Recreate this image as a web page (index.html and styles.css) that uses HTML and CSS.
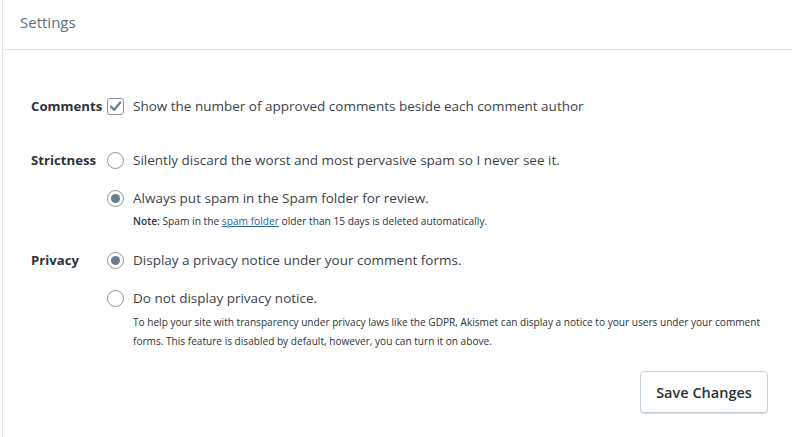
FILE: index.html
```html
<!DOCTYPE html>
<html>
<head>
<meta charset="utf-8">
<link rel="stylesheet" href="styles.css">
</head>
<body>
<div class="card">
  <div class="card-header">Settings</div>
  <div class="card-body">
    <div class="row row-comments">
      <div class="label">Comments</div>
      <div class="controls">
        <label class="option">
          <span class="checkbox"><svg viewBox="0 0 17 17" width="17" height="17"><path d="M4 8.6 L7.2 11.8 L13.2 4.6" fill="none" stroke="#6b8592" stroke-width="2.4" stroke-linecap="round" stroke-linejoin="round"/></svg></span>
          <span class="option-text">Show the number of approved comments beside each comment author</span>
        </label>
      </div>
    </div>
    <div class="row row-strictness">
      <div class="label">Strictness</div>
      <div class="controls">
        <label class="option">
          <span class="radio"></span>
          <span class="option-text">Silently discard the worst and most pervasive spam so I never see it.</span>
        </label>
        <label class="option option-next">
          <span class="radio checked"></span>
          <span class="option-text">Always put spam in the Spam folder for review.</span>
        </label>
        <p class="note"><strong>Note:</strong> Spam in the <a href="#">spam folder</a> older than 15 days is deleted automatically.</p>
      </div>
    </div>
    <div class="row row-privacy">
      <div class="label">Privacy</div>
      <div class="controls">
        <label class="option">
          <span class="radio checked"></span>
          <span class="option-text">Display a privacy notice under your comment forms.</span>
        </label>
        <label class="option option-next">
          <span class="radio"></span>
          <span class="option-text">Do not display privacy notice.</span>
        </label>
        <p class="help">To help your site with transparency under privacy laws like the GDPR, Akismet can display a notice to your users under your comment forms. This feature is disabled by default, however, you can turn it on above.</p>
      </div>
    </div>
    <div class="actions">
      <button class="save">Save Changes</button>
    </div>
  </div>
</div>
</body>
</html>
```
FILE: styles.css
```css
html, body {
  margin: 0;
  padding: 0;
  background: #ffffff;
}
body {
  font-family: "Open Sans", "Noto Sans", sans-serif;
  color: #3c434a;
}
.card {
  margin-left: 2px;
  border-left: 1px solid #dfe7ec;
  min-height: 437px;
}
.card-header {
  height: 50px;
  box-sizing: border-box;
  border-bottom: 1px solid #dce6ee;
  padding: 12px 0 0 17px;
  font-size: 15px;
  color: #5c6f80;
}
.card-body {
  padding: 44px 24px 0 28px;
}
.row {
  display: flex;
}
.label {
  width: 76px;
  flex: none;
  font-weight: 700;
  font-size: 13.2px;
  line-height: 24px;
  color: #2c3338;
}
.controls {
  flex: 1;
  min-width: 0;
}
.row-strictness {
  margin-top: 30px;
}
.row-privacy {
  margin-top: 19px;
}
.option {
  display: flex;
  align-items: center;
  height: 24px;
}
.option-next {
  margin-top: 14px;
}
.option-text {
  margin-left: 9px;
  font-size: 13.5px;
  color: #3c434a;
}
.checkbox {
  width: 15px;
  height: 15px;
  border: 1px solid #8c9196;
  border-radius: 3px;
  position: relative;
  flex: none;
}
.checkbox svg {
  position: absolute;
  left: -1px;
  top: -1px;
}
.radio {
  width: 15px;
  height: 15px;
  border: 1px solid #8f9398;
  border-radius: 50%;
  flex: none;
  display: flex;
  align-items: center;
  justify-content: center;
}
.radio.checked::after {
  content: "";
  width: 9px;
  height: 9px;
  border-radius: 50%;
  background: #6a7f8d;
}
.note {
  margin: 3px 0 0 26px;
  font-size: 10.2px;
  line-height: 16px;
  color: #2c3338;
}
.note strong {
  font-weight: 600;
}
.note a {
  color: #2a6496;
  text-decoration: underline;
}
.help {
  margin: 3px 0 0 26px;
  font-size: 10.1px;
  line-height: 19px;
  color: #2c3338;
}
.actions {
  display: flex;
  justify-content: flex-end;
  margin-top: 20px;
}
.save {
  width: 128px;
  height: 42px;
  background: #ffffff;
  border: 1px solid #c8d4dd;
  border-radius: 4px;
  box-shadow: 0 1px 0 #d5dee5;
  font-family: "Open Sans", "Noto Sans", sans-serif;
  font-size: 14.5px;
  font-weight: 600;
  color: #2c3338;
  padding: 0;
}
```
